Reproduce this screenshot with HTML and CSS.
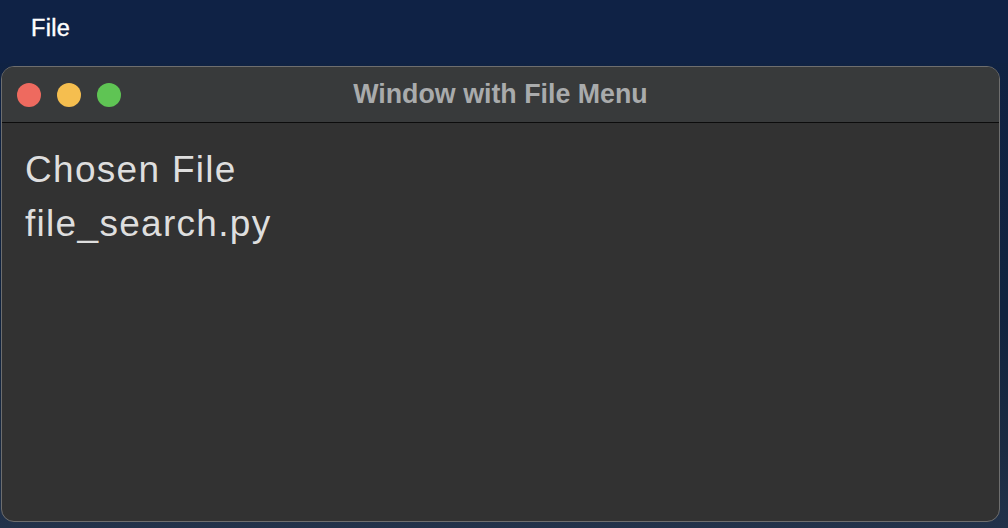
FILE: index.html
```html
<!DOCTYPE html>
<html>
<head>
<meta charset="utf-8">
<link rel="stylesheet" href="styles.css">
</head>
<body>
<div class="menubar"><span class="menu-item">File</span></div>
<div class="window">
  <div class="titlebar">
    <div class="lights">
      <span class="light red"></span>
      <span class="light yellow"></span>
      <span class="light green"></span>
    </div>
    <div class="title">Window with File Menu</div>
    <div class="spacer"></div>
  </div>
  <div class="content">
    <div class="line">Chosen File</div>
    <div class="line">file_search.py</div>
  </div>
</div>
</body>
</html>
```
FILE: styles.css
```css
html, body {
  margin: 0;
  padding: 0;
}
body {
  width: 1008px;
  height: 528px;
  overflow: hidden;
  background: linear-gradient(180deg, #0f2244 0%, #10233f 60%, #1b2b42 85%, #22324a 100%);
  font-family: "Liberation Sans", Arial, sans-serif;
}
.menubar {
  height: 63px;
  background: #0f2245;
  display: flex;
  align-items: flex-start;
  padding-left: 31px;
  box-sizing: border-box;
}
.menu-item {
  color: #ffffff;
  font-size: 23.5px;
  line-height: 24px;
  margin-top: 16px;
  letter-spacing: 0.3px;
  -webkit-text-stroke: 0.4px #ffffff;
}
.window {
  margin-top: 3px;
  margin-left: 1px;
  width: 999px;
  height: 456px;
  box-sizing: border-box;
  border: 1px solid #6e6e6e;
  border-radius: 13px;
  overflow: hidden;
  background: #323232;
  display: flex;
  flex-direction: column;
}
.titlebar {
  height: 55px;
  flex: none;
  background: #383a3b;
  border-bottom: 1px solid #0c0c0c;
  display: grid;
  grid-template-columns: 1fr auto 1fr;
  align-items: center;
}
.lights {
  display: flex;
  gap: 16px;
  padding-left: 15px;
  padding-top: 1px;
}
.light {
  width: 24px;
  height: 24px;
  border-radius: 50%;
  display: block;
}
.red { background: #ee6a5f; }
.yellow { background: #f5be4f; }
.green { background: #5fc454; }
.title {
  color: #a9abac;
  font-weight: bold;
  font-size: 26.8px;
  line-height: 30px;
  padding-bottom: 1px;
}
.content {
  flex: 1;
  padding: 20px 0 0 23px;
}
.line {
  color: #dedede;
  font-size: 37px;
  line-height: 53.5px;
  letter-spacing: 1.3px;
}
```
